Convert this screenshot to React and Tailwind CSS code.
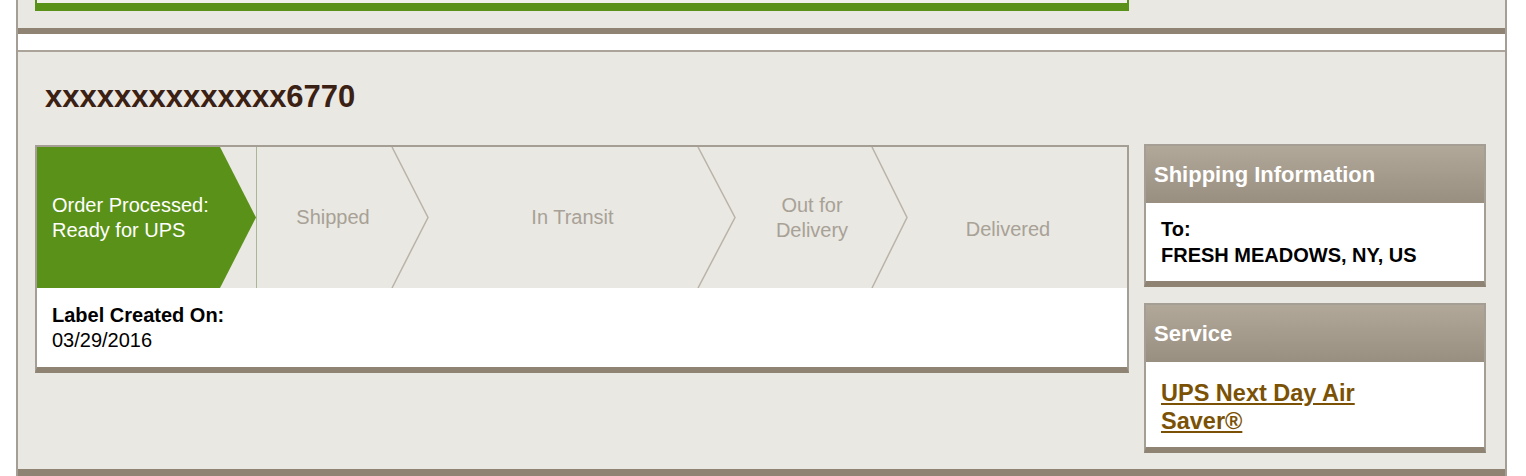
import React from 'react';

const steps = [
  { label: ['Shipped'], w: 'w-[154px]', pad: '' },
  { label: ['In Transit'], w: 'w-[325px]', pad: '' },
  { label: ['Out for', 'Delivery'], w: 'w-[154px]', pad: '' },
  { label: ['Delivered'], w: 'w-[238px]', pad: 'pt-[24px]' },
];

function Chevrons() {
  // chevron separators between steps, drawn on top of the row
  return (
    <svg className="absolute inset-0" width="1090" height="141" viewBox="0 0 1090 141">
      <polygon points="0,0 183,0 219,70.5 183,141 0,141" fill="#5a9219" />
      <line x1="219.5" y1="0" x2="219.5" y2="141" stroke="#a9b894" strokeWidth="1" />
      <polyline points="355,0 391,70.5 355,141" fill="none" stroke="#bab3a8" strokeWidth="1.5" />
      <polyline points="661,0 698,70.5 661,141" fill="none" stroke="#bab3a8" strokeWidth="1.5" />
      <polyline points="835,0 870,70.5 835,141" fill="none" stroke="#bab3a8" strokeWidth="1.5" />
    </svg>
  );
}

function Card({ title, children, bodyClass }) {
  return (
    <div className="border-x-2 border-t-2 border-b-[6px] border-x-[#a59e94] border-t-[#a59e94] border-b-[#8f8474]">
      <div className="h-[57px] flex items-center pl-[8px] bg-linear-to-b from-[#b2a899] to-[#998f80] text-white font-bold text-[22px]">
        {title}
      </div>
      <div className={'bg-white pl-[15px] ' + bodyClass}>{children}</div>
    </div>
  );
}

export default function App() {
  return (
    <div className="h-[476px] overflow-hidden bg-white" style={{ fontFamily: '"Liberation Sans", Arial, sans-serif' }}>
      <div className="ml-4 w-[1491px] h-full border-x-2 border-[#a59e94] bg-[#e9e8e3]">
        <div className="px-[17px]">
          <div className="w-[1094px] h-[11px] border-x-2 border-b-[8px] border-[#5a9219] bg-[#f1f0ec]" />
        </div>

        <div className="mt-[17px] border-t-[6px] border-[#8f8474] h-[24px] bg-white border-b-2 border-b-[#aaa49a]" />

        <div className="px-[17px]">
          <h1 className="mt-[27px] pl-[10px] text-[31px] leading-[36px] font-bold text-[#3b2014]">
            xxxxxxxxxxxxxx6770
          </h1>

          <div className="mt-[30px] flex gap-[15px] items-start">
            <div className="w-[1094px] border-x-2 border-t-2 border-b-[6px] border-x-[#a59e94] border-t-[#a59e94] border-b-[#8f8474]">
              <div className="relative h-[141px] flex text-[20px] leading-[25px]">
                <Chevrons />
                <div className="relative w-[219px] flex items-center pl-[15px] text-white">
                  <div>
                    <div>Order Processed:</div>
                    <div>Ready for UPS</div>
                  </div>
                </div>
                {steps.map((s, i) => (
                  <div key={i} className={'relative flex items-center justify-center text-center text-[#a8a196] ' + s.w + ' ' + s.pad}>
                    <div>
                      {s.label.map(l => <div key={l}>{l}</div>)}
                    </div>
                  </div>
                ))}
              </div>
              <div className="bg-white h-[79px] pl-[15px] pt-[15px] text-[20px] leading-[25px] text-black">
                <div className="font-bold">Label Created On:</div>
                <div>03/29/2016</div>
              </div>
            </div>

            <div className="w-[342px] flex flex-col gap-[16px] -mt-px">
              <Card title="Shipping Information" bodyClass="h-[78px] pt-[13px] text-[20px] leading-[26px] font-bold text-black">
                <div>To:</div>
                <div>FRESH MEADOWS, NY, US</div>
              </Card>
              <Card title="Service" bodyClass="h-[85px] pt-[17px] text-[23.5px] leading-[28px] font-bold">
                <a href="#" className="block w-[230px] text-[#7b5205] underline">UPS Next Day Air Saver®</a>
              </Card>
            </div>
          </div>
        </div>

        <div className="mt-[16px] h-[8px] bg-[#8f8474]" />
      </div>
    </div>
  );
}
